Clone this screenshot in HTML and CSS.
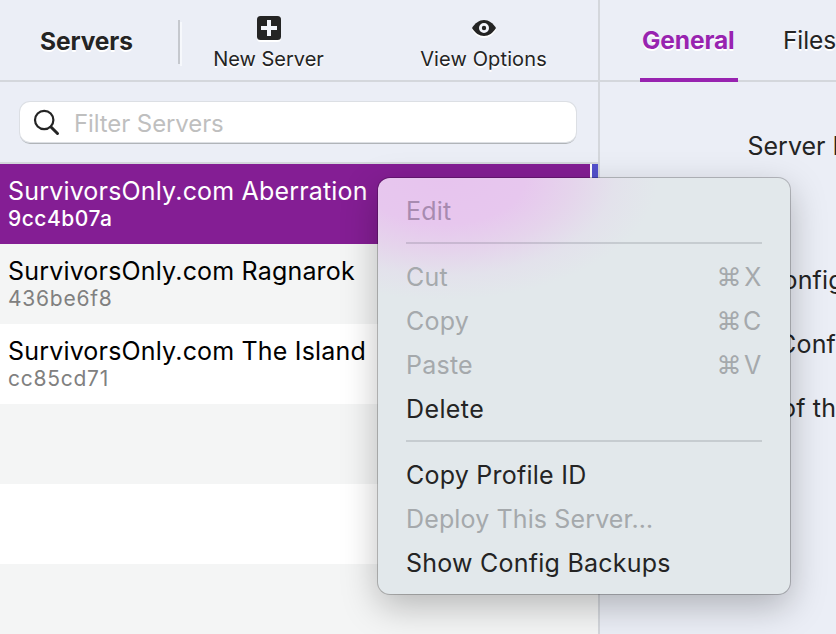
FILE: index.html
```html
<!DOCTYPE html>
<html lang="en">
<head>
<meta charset="utf-8">
<title>Servers</title>
<link rel="stylesheet" href="styles.css">
</head>
<body>
<div class="window">
  <aside class="sidebar">
    <header class="toolbar">
      <h1 class="title"><span>Servers</span></h1>
      <div class="divider"></div>
      <button class="tool new-server">
        <svg width="24" height="24" viewBox="0 0 24 24"><rect width="24" height="24" rx="3.5" fill="#242424"/><path d="M4 12H20M12 4V20" stroke="#f4f6fc" stroke-width="4"/></svg>
        <span class="new-label">New Server</span>
      </button>
      <button class="tool view-options">
        <svg width="24" height="24" viewBox="0 0 24 24"><path d="M0 12C3 7 7.300 4 12 4S21 7 24 12C21 17 16.700 20 12 20S3 17 0 12Z" fill="#242424"/><circle cx="12" cy="12" r="3.600" fill="#242424" stroke="#f4f6fc" stroke-width="2.800"/></svg>
        <span class="view-label">View Options</span>
      </button>
    </header>
    <div class="filter">
      <div class="search">
        <svg width="28" height="28" viewBox="0 0 28 28" fill="none" stroke="#242424"><circle cx="11.200" cy="12" r="9.200" stroke-width="2.200"/><path d="M18 19L24.500 25.500" stroke-width="3" stroke-linecap="round"/></svg>
        <span>Filter Servers</span>
      </div>
    </div>
    <div class="list">
      <div class="row selected"><b>SurvivorsOnly.com Aberration</b><small>9cc4b07a</small></div>
      <div class="row"><b>SurvivorsOnly.com Ragnarok</b><small>436be6f8</small></div>
      <div class="row"><b>SurvivorsOnly.com The Island</b><small>cc85cd71</small></div>
      <div class="row"></div>
      <div class="row"></div>
      <div class="row"></div>
    </div>
  </aside>
  <main class="detail">
    <nav class="tabs">
      <div class="tab active"><span>General</span></div>
      <div class="tab files"><span>Files</span></div>
    </nav>
    <div class="form">
      <div class="label name">Server Name</div>
      <div class="label config">Config</div>
      <div class="label conf">Config</div>
      <div class="label ofthe">of the</div>
    </div>
  </main>
</div>
<div class="menu">
  <div class="item off edit"><span>Edit</span></div>
  <div class="sep"></div>
  <div class="item off"><span>Cut</span><span class="key"><i>⌘</i><i>X</i></span></div>
  <div class="item off"><span>Copy</span><span class="key"><i>⌘</i><i>C</i></span></div>
  <div class="item off"><span>Paste</span><span class="key"><i>⌘</i><i>V</i></span></div>
  <div class="item"><span class="delete">Delete</span></div>
  <div class="sep"></div>
  <div class="item"><span>Copy Profile ID</span></div>
  <div class="item off"><span class="deploy">Deploy This Server…</span></div>
  <div class="item"><span>Show Config Backups</span></div>
</div>
</body>
</html>
```
FILE: styles.css
```css
* { box-sizing: border-box; }
body { margin: 0; width: 836px; height: 634px; overflow: hidden; font-family: Inter, "Liberation Sans", sans-serif; font-size: 25px; color: #242424; background: #ebeef6; }
svg { display: block; flex: none; }
.window { display: flex; width: 836px; height: 634px; overflow: hidden; white-space: nowrap; }
.sidebar { width: 600px; flex: none; border-right: 2px solid #d4d7dc; }
.toolbar { height: 82px; display: flex; border-bottom: 2px solid #d4d7dc; text-shadow: 0 2px 0 #fff; }
.title { margin: 0; width: 178px; flex: none; padding-left: 40px; font-size: 24.500px; letter-spacing: -.1px; line-height: 82px; font-weight: 700; }
.title span { display: block; margin-top: -.5px; }
.divider { width: 2px; height: 44px; flex: none; margin-top: 20px; background: #c5c8ce; box-shadow: 2px 2px 0 #f6f8fc; }
.tool { border: 0; flex: none; padding: 16px 0 0; background: none; font: 20px/24px Inter, sans-serif; color: inherit; text-shadow: inherit; display: flex; flex-direction: column; align-items: center; gap: 7px; }
.tool svg { filter: drop-shadow(0 2px 0 #fff); }
.new-server { width: 178px; }
.view-options { width: 252px; letter-spacing: .12px; }
.new-label, .view-label { margin-left: -1px; }
.filter { height: 82px; padding: 20px 22px 0 20px; border-bottom: 2px solid #d4d7dc; }
.search { height: 40px; display: flex; align-items: center; background: #fff; border-radius: 10px; box-shadow: 0 0 0 1px #dcdfe4, 0 2px 0 #b0b4b8; padding-left: 13px; gap: 13px; font-size: 24px; letter-spacing: -.1px; color: #bfbfbf; }
.search span { padding-top: 3px; }
.list { overflow: hidden; height: 470px; background: #fff; }
.row { height: 80px; padding: 11px 0 0 8px; }
.row:nth-child(even) { background: #f4f5f5; }
.row b, .row small { display: block; width: max-content; font-weight: 400; }
.row b { font-size: 25px; line-height: 32px; letter-spacing: .18px; color: #000; }
.row small { font-size: 21px; line-height: 23px; letter-spacing: .75px; color: #808080; }
.selected { background: linear-gradient(90deg, #841e94 590px, #fff 590px 592px, #5350cd 592px); }
.row.selected b, .row.selected small { color: #fff; }
.row.selected small { font-weight: 500; letter-spacing: .5px; }
.detail { flex: 1; min-width: 0; overflow: hidden; }
.tabs { height: 82px; display: flex; padding-left: 40px; border-bottom: 2px solid #d4d7dc; text-shadow: 0 2px 0 #fff; line-height: 81px; }
.tab { height: 82px; flex: none; }
.active { width: 98px; padding-left: 2px; border-bottom: 4px solid #9823b0; color: #9823b0; font-weight: 700; font-size: 24.500px; letter-spacing: -.1px; }
.files { margin-left: 45px; font-size: 24.500px; letter-spacing: -.1px; }
.form { padding-top: 48px; }
.label { height: 32px; line-height: 32px; width: max-content; letter-spacing: .2px; }
.name { margin: 0 0 102px 147.500px; letter-spacing: 0; }
.config { margin: 0 0 32px 164px; }
.conf { margin: 0 0 32px 178px; }
.ofthe { margin-left: 181px; }
.menu { position: absolute; left: 378px; top: 178px; width: 412px; height: 416px; border-radius: 12px; padding: 11px 28px; background: radial-gradient(ellipse 215px 122px at 65px 0, #e7c4ee 0, #e7c7ee 38%, rgba(230,207,236,.8) 60%, rgba(228,220,236,.5) 80%, rgba(226,232,235,0) 100%), #e2e8eb; box-shadow: 0 0 0 1px rgba(0,0,0,.22), 0 12px 36px rgba(0,0,0,.26); letter-spacing: .24px; white-space: nowrap; }
.item { height: 44px; line-height: 44px; display: flex; justify-content: space-between; }
.off { color: #a5a9ac; }
.edit { color: #a78bb0; }
.delete { letter-spacing: .4px; }
.deploy { letter-spacing: .13px; }
.sep { height: 22px; padding-top: 9px; }
.sep::before { content: ""; display: block; height: 2px; background: rgba(60,65,75,.17); }
.key { display: flex; width: 45px; margin-right: .5px; justify-content: space-between; }
.key i { font-style: normal; }
```
